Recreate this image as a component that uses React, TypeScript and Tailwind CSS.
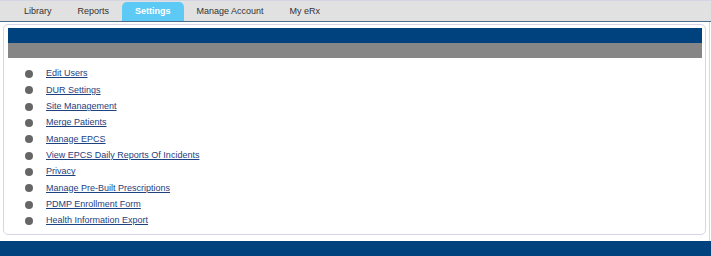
const tabs = ["Library", "Reports", "Settings", "Manage Account", "My eRx"];

const links = [
  "Edit Users",
  "DUR Settings",
  "Site Management",
  "Merge Patients",
  "Manage EPCS",
  "View EPCS Daily Reports Of Incidents",
  "Privacy",
  "Manage Pre-Built Prescriptions",
  "PDMP Enrollment Form",
  "Health Information Export",
];

export default function App() {
  return (
    <div className="w-[711px] h-[256px] bg-white font-['Liberation_Sans',Arial,sans-serif] overflow-hidden">
      {/* tab strip */}
      <div className="h-[22px] bg-[#e1e1e1] border-t border-[#d4d4e4] border-b border-b-[#4d6c8c] flex items-end pl-[11px]">
        {tabs.map((t) =>
          t === "Settings" ? (
            <div
              key={t}
              className="h-[19px] px-[13px] flex items-center rounded-t-[5px] bg-[#5ccaf5] text-white font-bold text-[9px]"
            >
              {t}
            </div>
          ) : (
            <div key={t} className="h-[19px] px-[13px] flex items-center text-[#333] text-[9px]">
              {t}
            </div>
          )
        )}
      </div>

      <div className="flex flex-col border-r border-[#d8d8ec] mr-[1px]">
        <div className="mt-[2px] ml-[3px] mr-[3px] border border-[#d6d6ea] rounded-[5px] pl-[4px] pr-[3px] pt-[3px] pb-[5px]">
          <div className="h-[15px] bg-[#00427d]" />
          <div className="h-[15px] bg-[#868686]" />
          <ul className="mt-[8px] pl-[17px]">
            {links.map((l) => (
              <li key={l} className="h-[16.33px] flex items-center">
                <span className="w-[8px] h-[8px] rounded-full bg-[#666] mr-[13px]" />
                <a href="#" className="text-[9px] text-[#1e4180] underline">
                  {l}
                </a>
              </li>
            ))}
          </ul>
        </div>
        <div className="h-[6px]" />
      </div>
      <div className="h-[15px] bg-[#00427d]" />
    </div>
  );
}
